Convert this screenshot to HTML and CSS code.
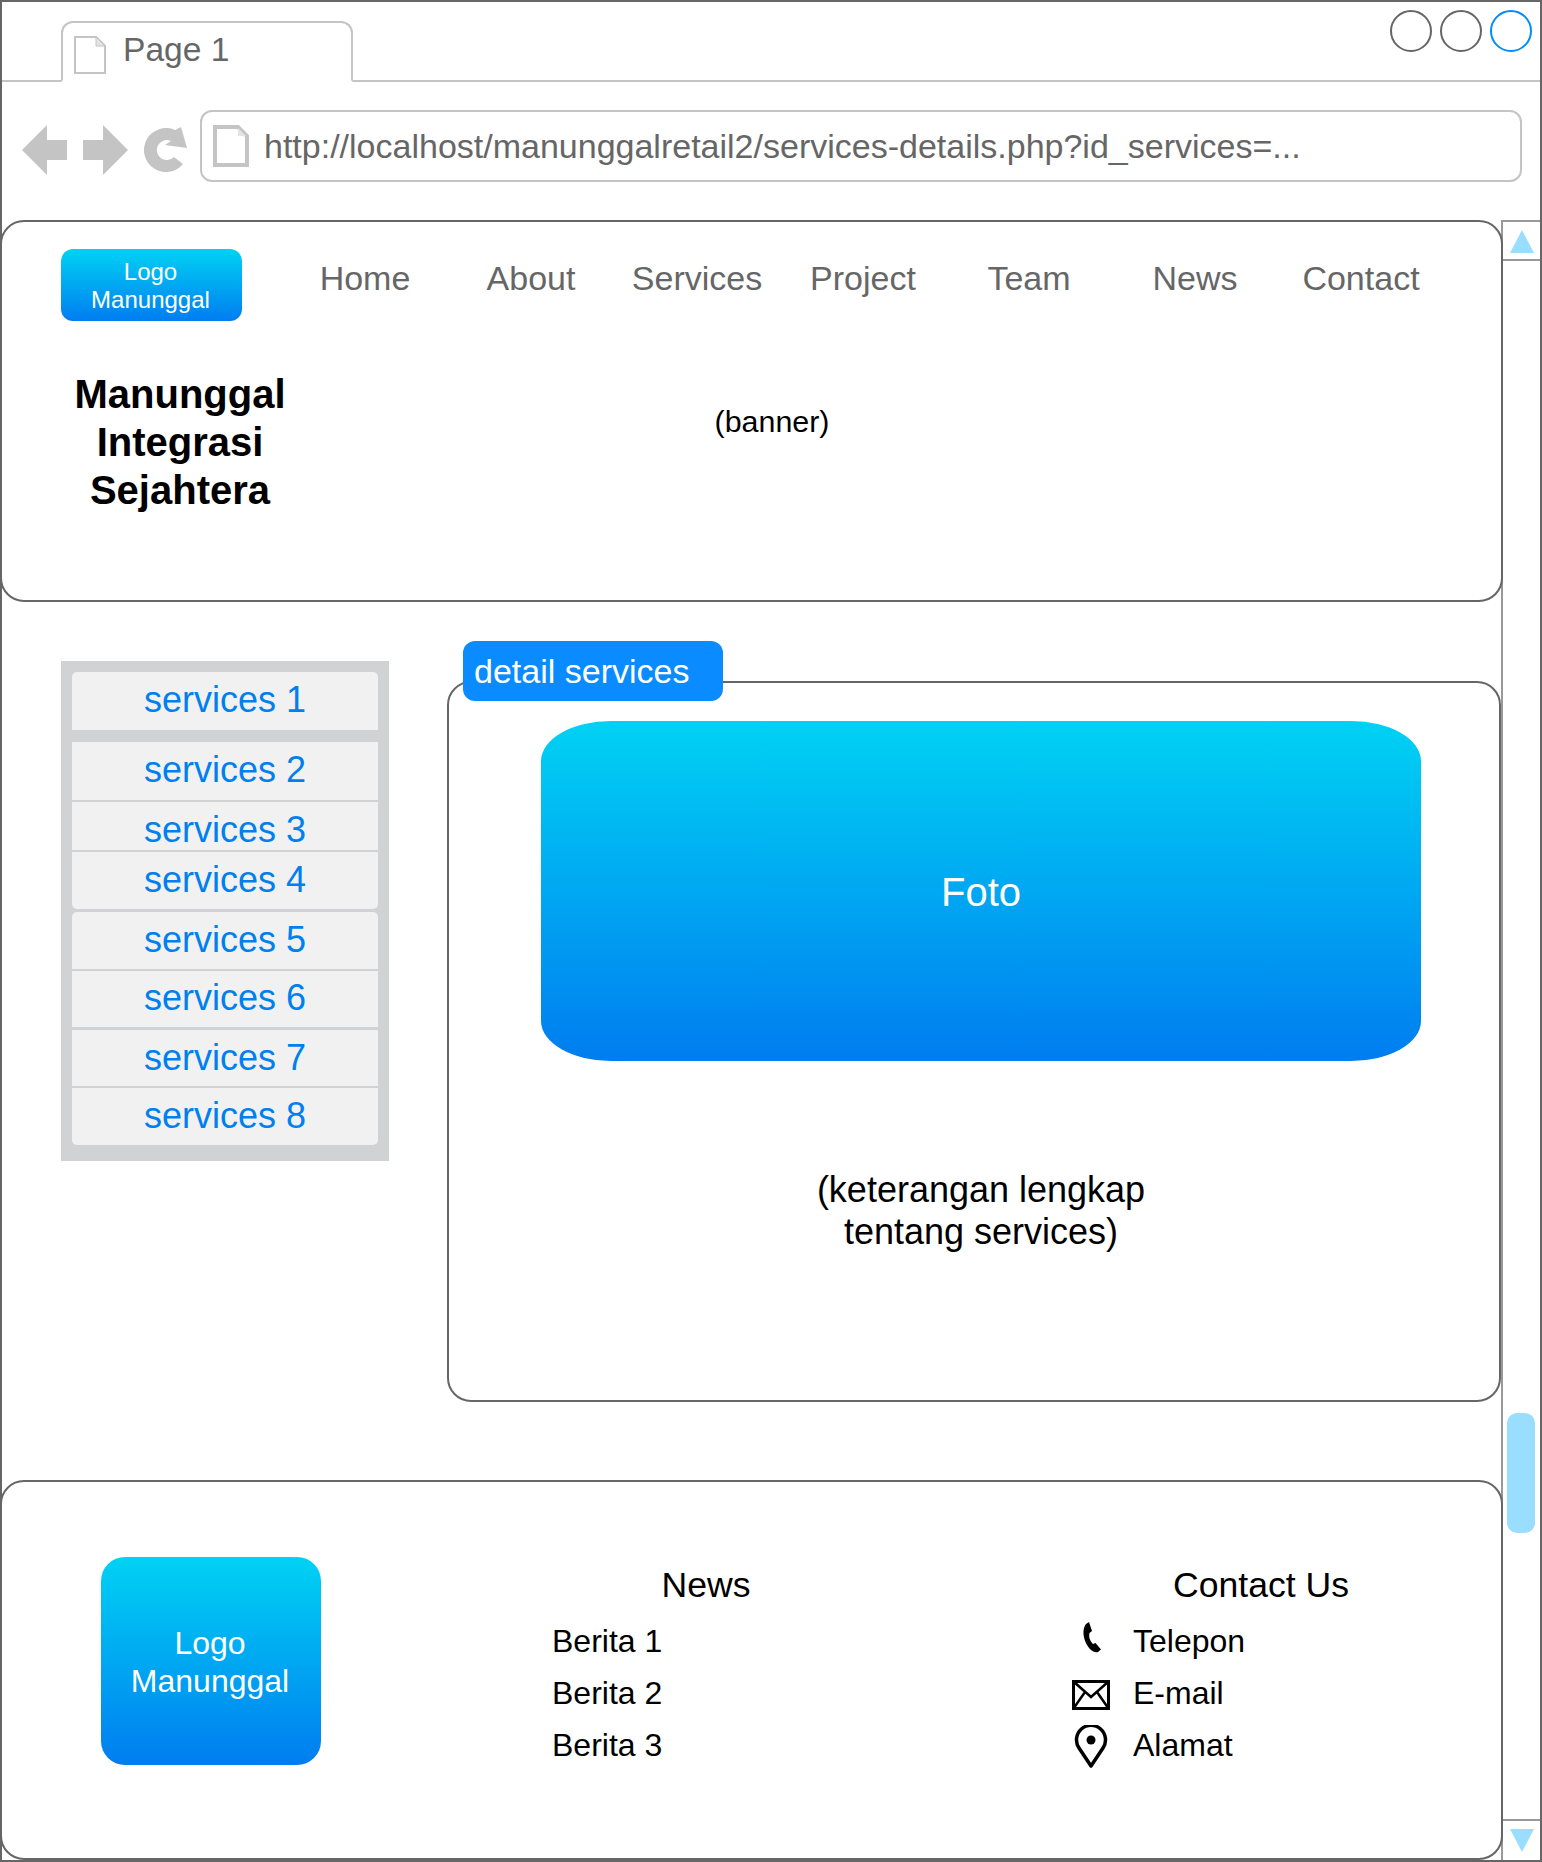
FILE: index.html
```html
<!DOCTYPE html>
<html lang="id">
<head>
  <meta charset="UTF-8" />
  <title>Page 1</title>
  <link rel="stylesheet" href="styles.css">
</head>
<body>
  <div class="window">
    <div class="tabbar">
      <div class="tab">
        <svg class="tab-doc" width="34" height="40" viewBox="0 0 34 40"><path d="M2 2H23L32 11V38H2Z" fill="#fff" stroke="#c4c4c4" stroke-width="2"/><path d="M23 2V11H32Z" fill="#e4e4e4" stroke="#c4c4c4" stroke-width="1"/></svg>
        <span>Page 1</span>
      </div>
      <div class="win-btns">
        <span class="win-btn"></span>
        <span class="win-btn"></span>
        <span class="win-btn win-btn-blue"></span>
      </div>
    </div>

    <div class="toolbar">
      <svg class="nav-icon" width="46" height="50" viewBox="0 0 46 50"><path d="M0 25L25 0V15H45V35H25V50Z" fill="#c4c4c4"/></svg>
      <svg class="nav-icon" width="46" height="50" viewBox="0 0 46 50"><path d="M45 25L20 0V15H0V35H20V50Z" fill="#c4c4c4"/></svg>
      <svg class="nav-icon" width="44" height="46" viewBox="0 0 44 46"><path d="M39 37A22 22 0 1 1 31 3L37 0L43 21L21 18L27 14A10 10 0 1 0 30 30Z" fill="#c4c4c4"/></svg>
      <div class="address">
        <svg width="36" height="42" viewBox="0 0 36 42"><path d="M2 2H25L34 11V40H2Z" fill="#fff" stroke="#c4c4c4" stroke-width="4"/><path d="M25 3V11H33Z" fill="#e4e4e4"/></svg>
        <span>http://localhost/manunggalretail2/services-details.php?id_services=...</span>
      </div>
    </div>

    <div class="viewport">
      <div class="page">
        <header class="card header-card">
          <div class="top-row">
            <div class="logo-small">Logo<br>Manunggal</div>
            <nav class="menu">
              <a>Home</a><a>About</a><a>Services</a><a>Project</a><a>Team</a><a>News</a><a>Contact</a>
            </nav>
          </div>
          <div class="hero-row">
            <h1 class="company">Manunggal Integrasi Sejahtera</h1>
            <div class="banner">(banner)</div>
          </div>
        </header>

        <section class="middle">
          <ul class="side-list">
            <li class="side-item s1">services 1</li>
            <li class="side-item s2">services 2</li>
            <li class="side-item s3">services 3</li>
            <li class="side-item s4">services 4</li>
            <li class="side-item s5">services 5</li>
            <li class="side-item s6">services 6</li>
            <li class="side-item s7">services 7</li>
            <li class="side-item s8">services 8</li>
          </ul>
          <div class="detail">
            <div class="detail-label">detail services</div>
            <div class="foto">Foto</div>
            <p class="detail-text">(keterangan lengkap<br>tentang services)</p>
          </div>
        </section>

        <footer class="card footer-card">
          <div class="logo-big">Logo<br>Manunggal</div>
          <div class="foot-news">
            <h3>News</h3>
            <div class="foot-line">Berita 1</div>
            <div class="foot-line">Berita 2</div>
            <div class="foot-line">Berita 3</div>
          </div>
          <div class="foot-contact">
            <h3>Contact Us</h3>
            <div class="foot-line">
              <svg class="foot-icon" width="40" height="40" viewBox="0 0 40 40"><path d="M15 3L18 1L21 10L18.500 12C17.500 16 19 20 22 23L24.500 22L30 28.500L27 31C23 32 19 29 16 24C12 17 11 8 15 3Z" fill="#000"/></svg>
              Telepon
            </div>
            <div class="foot-line">
              <svg class="foot-icon foot-icon-mail" width="40" height="40" viewBox="0 0 40 40"><path d="M2.500 6.500H37.500V33.500H2.500Z" fill="none" stroke="#000" stroke-width="3"/><path d="M2.500 6.500L20 22L37.500 6.500M2.500 33.500L14 17M37.500 33.500L26 17" fill="none" stroke="#000" stroke-width="2.500"/></svg>
              E-mail
            </div>
            <div class="foot-line">
              <svg class="foot-icon foot-icon-pin" width="40" height="44" viewBox="0 0 40 44"><path d="M20 41L8 23A14.500 14.500 0 1 1 32 23Z" fill="none" stroke="#000" stroke-width="3.500" stroke-linejoin="round"/><circle cx="20" cy="15" r="4.500" fill="#000"/></svg>
              Alamat
            </div>
          </div>
        </footer>
      </div>

      <div class="scrollbar">
        <div class="scroll-btn scroll-up"><span class="tri-up"></span></div>
        <div class="scroll-track"><div class="scroll-thumb"></div></div>
        <div class="scroll-btn scroll-down"><span class="tri-down"></span></div>
      </div>
    </div>
  </div>
</body>
</html>
```

FILE: styles.css
```css
* {
  box-sizing: border-box;
}

body {
  margin: 0;
  font-family: "Liberation Sans", Arial, sans-serif;
  background-color: white;
  color: #000;
}

.window {
  width: 1542px;
  height: 1862px;
  border: 2px solid #666;
  display: flex;
  flex-direction: column;
  overflow: hidden;
}

/* barra de abas */
.tabbar {
  height: 80px;
  border-bottom: 2px solid #c4c4c4;
  display: flex;
  justify-content: space-between;
  padding-left: 59px;
  flex-shrink: 0;
}

.tab {
  width: 292px;
  height: 61px;
  margin-top: 19px;
  border: 2px solid #c4c4c4;
  border-bottom: 2px solid #fff;
  border-radius: 12px 12px 0 0;
  background-color: #fff;
  display: flex;
  align-items: center;
  padding-left: 10px;
  color: #666;
  font-size: 33.600px;
}

.tab-doc {
  margin-right: 16px;
  margin-top: 6px;
}

.tab span {
  margin-top: -4px;
}

.win-btns {
  display: flex;
  gap: 8px;
  padding: 8px 8px 0 0;
}

.win-btn {
  width: 42px;
  height: 42px;
  border: 2px solid #666;
  border-radius: 50%;
}

.win-btn-blue {
  border-color: #008cff;
}

/* barra de endereço */
.toolbar {
  height: 138px;
  display: flex;
  align-items: flex-start;
  padding: 28px 18px 0 20px;
  flex-shrink: 0;
}

.nav-icon {
  margin-top: 15px;
  margin-right: 15px;
}

.nav-icon:nth-child(3) {
  margin-right: 12px;
  margin-top: 17px;
}

.address {
  flex: 1;
  height: 72px;
  border: 2px solid #c4c4c4;
  border-radius: 12px;
  display: flex;
  align-items: center;
  padding-left: 11px;
  color: #666;
  font-size: 34px;
}

.address svg {
  margin-right: 15px;
}

.viewport {
  flex: 1;
  display: flex;
  min-height: 0;
}

.page {
  position: relative;
  z-index: 1;
  width: 1499px;
  flex-shrink: 0;
}

.card {
  margin-left: -2px;
  width: 1503px;
  border: 2px solid #666;
  border-radius: 24px;
  background-color: #fff;
}

/* cabeçalho */
.header-card {
  height: 382px;
  padding: 27px 0 0 59px;
}

.top-row {
  display: flex;
}

.logo-small {
  width: 181px;
  height: 72px;
  padding-right: 2px;
  border-radius: 12px;
  background: linear-gradient(#00d2f3, #007df0);
  color: #fff;
  font-size: 24px;
  line-height: 28px;
  text-align: center;
  padding-top: 9px;
}

.menu {
  display: grid;
  grid-template-columns: repeat(7, 166px);
  margin-left: 40px;
  color: #666;
  font-size: 34px;
  line-height: 58px;
  text-align: center;
}

.hero-row {
  display: flex;
  margin-top: 49px;
}

.company {
  width: 238px;
  margin: 0;
  font-size: 40px;
  line-height: 48px;
  font-weight: bold;
  text-align: center;
}

.banner {
  width: 946px;
  padding-top: 35px;
  font-size: 30.400px;
  line-height: 33px;
  text-align: center;
}

/* área do meio */
.middle {
  height: 878px;
  display: flex;
  align-items: flex-start;
  padding: 59px 0 0 59px;
}

.side-list {
  width: 328px;
  height: 500px;
  margin: 0;
  padding: 11px;
  list-style: none;
  background-color: #d1d2d4;
  flex-shrink: 0;
}

.side-item {
  background-color: #f1f1f1;
  color: #007fee;
  font-size: 36px;
  line-height: 44px;
  text-align: center;
  margin-bottom: 2px;
}

.s1 {
  height: 58px;
  margin-bottom: 12px;
  padding-top: 6px;
  border-radius: 5px 5px 0 0;
}

.s2 {
  height: 58px;
  padding-top: 6px;
}

.s3 {
  height: 48px;
  padding-top: 6px;
}

.s4 {
  height: 57px;
  margin-bottom: 3px;
  padding-top: 6px;
  border-radius: 0 0 5px 5px;
}

.s5 {
  height: 57px;
  padding-top: 6px;
  border-radius: 5px 5px 0 0;
}

.s6 {
  height: 56px;
  margin-bottom: 3px;
  padding-top: 5px;
}

.s7 {
  height: 56px;
  padding-top: 6px;
}

.s8 {
  height: 57px;
  padding-top: 6px;
  margin-bottom: 0;
  border-radius: 0 0 5px 5px;
}

.detail {
  position: relative;
  width: 1056px;
  height: 721px;
  margin: 20px 0 0 58px;
  border: 2px solid #666;
  border-radius: 24px;
  padding: 38px 0 0 92px;
  background-color: #fff;
}

.detail-label {
  position: absolute;
  left: 14px;
  top: -42px;
  width: 260px;
  height: 60px;
  padding-left: 11px;
  border-radius: 12px;
  background-color: #0a8bff;
  color: #fff;
  font-size: 34px;
  line-height: 60px;
}

.foto {
  width: 880px;
  height: 340px;
  border-radius: 70px / 40px;
  background: linear-gradient(#00d2f3, #007df0);
  color: #fff;
  font-size: 40px;
  line-height: 342px;
  text-align: center;
}

.detail-text {
  width: 880px;
  margin: 108px 0 0;
  font-size: 36px;
  line-height: 42px;
  text-align: center;
}

/* rodapé */
.footer-card {
  height: 380px;
  display: flex;
  align-items: flex-start;
  padding: 75px 0 0 99px;
}

.logo-big {
  width: 220px;
  height: 208px;
  padding: 67px 2px 0 0;
  border-radius: 24px;
  background: linear-gradient(#00d2f3, #007df0);
  color: #fff;
  font-size: 32px;
  line-height: 38px;
  text-align: center;
  flex-shrink: 0;
}

.foot-news,
.foot-contact {
  font-size: 32px;
}

.foot-news h3,
.foot-contact h3 {
  margin: 0 0 2px;
  font-size: 35.600px;
  font-weight: normal;
  line-height: 56px;
  text-align: center;
}

.foot-news {
  width: 308px;
  margin-left: 231px;
}

.foot-contact {
  width: 380px;
  margin-left: 211px;
}

.foot-line {
  height: 52px;
  line-height: 52px;
  display: flex;
  align-items: center;
}

.foot-icon {
  margin-right: 22px;
  flex-shrink: 0;
}

.foot-icon-mail {
  margin-top: 4px;
}

.foot-icon-pin {
  margin-top: 3px;
}

/* barra de rolagem */
.scrollbar {
  flex: 1;
  border-left: 2px solid #999;
  display: flex;
  flex-direction: column;
}

.scroll-btn {
  height: 41px;
  display: flex;
  justify-content: center;
  background-color: #fff;
  flex-shrink: 0;
}

.scroll-up {
  border-bottom: 2px solid #999;
  border-top: 2px solid #999;
  padding-top: 8px;
}

.scroll-down {
  border-top: 2px solid #999;
  padding-top: 8px;
}

.tri-up {
  width: 0;
  height: 0;
  border-left: 12px solid transparent;
  border-right: 12px solid transparent;
  border-bottom: 23px solid #99ddff;
}

.tri-down {
  width: 0;
  height: 0;
  border-left: 12px solid transparent;
  border-right: 12px solid transparent;
  border-top: 23px solid #99ddff;
}

.scroll-track {
  flex: 1;
  padding: 1152px 4px 0 4px;
}

.scroll-thumb {
  width: 28px;
  height: 120px;
  border-radius: 10px;
  background-color: #99ddff;
}
```
